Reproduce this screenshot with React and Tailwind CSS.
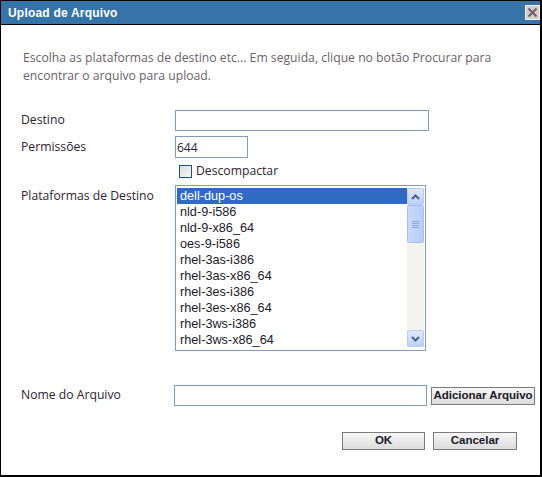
import React from 'react'

const PLATFORMS = [
  'dell-dup-os',
  'nld-9-i586',
  'nld-9-x86_64',
  'oes-9-i586',
  'rhel-3as-i386',
  'rhel-3as-x86_64',
  'rhel-3es-i386',
  'rhel-3es-x86_64',
  'rhel-3ws-i386',
  'rhel-3ws-x86_64',
]

const arial = { fontFamily: '"Liberation Sans", Arial, sans-serif' }
const ui = { fontFamily: '"Open Sans", "DejaVu Sans", sans-serif' }

function ScrollButton({ up }) {
  return (
    <div className="h-[17px] w-[17px] rounded-[2px] border border-[#b9cdf5] bg-gradient-to-b from-[#dde8fe] to-[#bcd0f8] flex items-center justify-center">
      <svg width="9" height="6" viewBox="0 0 9 6">
        <path
          d={up ? 'M1 5 L4.5 1.5 L8 5' : 'M1 1 L4.5 4.5 L8 1'}
          fill="none"
          stroke="#4d6185"
          strokeWidth="2"
        />
      </svg>
    </div>
  )
}

function Scrollbar() {
  return (
    <div className="w-[17px] h-full flex flex-col bg-[#f4f3ee]">
      <ScrollButton up />
      <div className="h-[38px] w-[17px] rounded-[2px] border border-[#a7c0f2] bg-gradient-to-r from-[#c9d9fc] to-[#b8cdf8] flex flex-col items-center justify-center gap-[1px]">
        <div className="w-[7px] h-[1px] bg-[#8aa8ea]" />
        <div className="w-[7px] h-[1px] bg-[#8aa8ea]" />
        <div className="w-[7px] h-[1px] bg-[#8aa8ea]" />
        <div className="w-[7px] h-[1px] bg-[#8aa8ea]" />
      </div>
      <div className="flex-1" />
      <ScrollButton />
    </div>
  )
}

function Button({ children, className }) {
  return (
    <button
      className={`h-[18px] border border-[#7b7b7b] bg-gradient-to-b from-[#f6f6f6] to-[#dcdcdc] text-[11.5px] font-bold text-[#1a1a2a] leading-none whitespace-nowrap ${className}`}
      style={arial}
    >
      {children}
    </button>
  )
}

export default function App() {
  return (
    <div
      className="w-[542px] h-[477px] bg-white border-l border-t border-r-2 border-b-2 border-black flex flex-col"
      style={arial}
    >
      {/* barra de título */}
      <div className="h-[24px] bg-[#3573a8] border-b border-black flex items-center justify-between pl-[7px]">
        <span className="text-white text-[12px] font-bold tracking-[0.2px]">Upload de Arquivo</span>
        <div className="w-[15px] h-[15px] bg-[#d4d0c8] border border-[#f0f0f0] flex items-center justify-center self-center">
          <svg width="11" height="11" viewBox="0 0 11 11">
            <path d="M1.5 1.5 L9.5 9.5 M9.5 1.5 L1.5 9.5" stroke="#6b5e6e" strokeWidth="2" />
          </svg>
        </div>
      </div>

      <div className="pl-[20px] flex flex-col" style={ui}>
        <p className="mt-[24px] pl-[2px] text-[12.2px] leading-[18px] text-[#6b5f6b] w-[510px]">
          Escolha as plataformas de destino etc... Em seguida, clique no botão Procurar para encontrar o arquivo para upload.
        </p>

        {/* Destino */}
        <div className="mt-[25px] flex items-center h-[21px]">
          <label className="w-[154px] text-[12.2px] text-[#2e2430]">Destino</label>
          <input className="w-[254px] h-[21px] border border-[#7f9db9] outline-none px-[2px] text-[12px]" />
        </div>

        {/* Permissões */}
        <div className="mt-[5px] flex items-center h-[22px]">
          <label className="w-[154px] text-[12.2px] text-[#2e2430]">Permissões</label>
          <input
            defaultValue="644"
            className="w-[73px] h-[22px] border border-[#7f9db9] outline-none px-[1px] text-[12px] text-[#2a1f3a]"
          />
        </div>

        {/* Descompactar */}
        <div className="mt-[4px] flex items-center h-[18px] pl-[158px]">
          <div className="w-[13px] h-[13px] border border-[#1c5180] bg-gradient-to-br from-[#dcdcd6] to-[#f8f8f6]" />
          <span className="ml-[4px] text-[12.2px] text-[#2e2430]">Descompactar</span>
        </div>

        {/* Plataformas */}
        <div className="mt-[5px] flex">
          <label className="w-[154px] pt-[2px] text-[12.2px] text-[#2e2430]">Plataformas de Destino</label>
          <div className="w-[251px] h-[166px] border border-[#7f9db9] p-[1px] flex" style={arial}>
            <div className="flex-1 pt-[1px] flex flex-col">
              {PLATFORMS.map((p, i) => (
                <div
                  key={p}
                  className={`h-[16px] pl-[3px] text-[12.7px] leading-[16px] ${i === 0 ? 'bg-[#316ac5] text-white' : 'text-[#221a2a]'}`}
                >
                  {p}
                </div>
              ))}
            </div>
            <div className="pt-[1px] pb-[2px]">
              <Scrollbar />
            </div>
          </div>
        </div>

        {/* Nome do Arquivo */}
        <div className="mt-[34px] flex items-center h-[21px]">
          <label className="w-[153px] text-[12.2px] text-[#2e2430]">Nome do Arquivo</label>
          <input className="w-[253px] h-[21px] border border-[#7f9db9] outline-none px-[2px] text-[12px]" />
          <Button className="ml-[4px] w-[104px]">Adicionar Arquivo</Button>
        </div>

        {/* Ações */}
        <div className="mt-[26px] flex justify-end pr-[23px] gap-[8px]">
          <Button className="w-[83px]">OK</Button>
          <Button className="w-[84px]">Cancelar</Button>
        </div>
      </div>
    </div>
  )
}
